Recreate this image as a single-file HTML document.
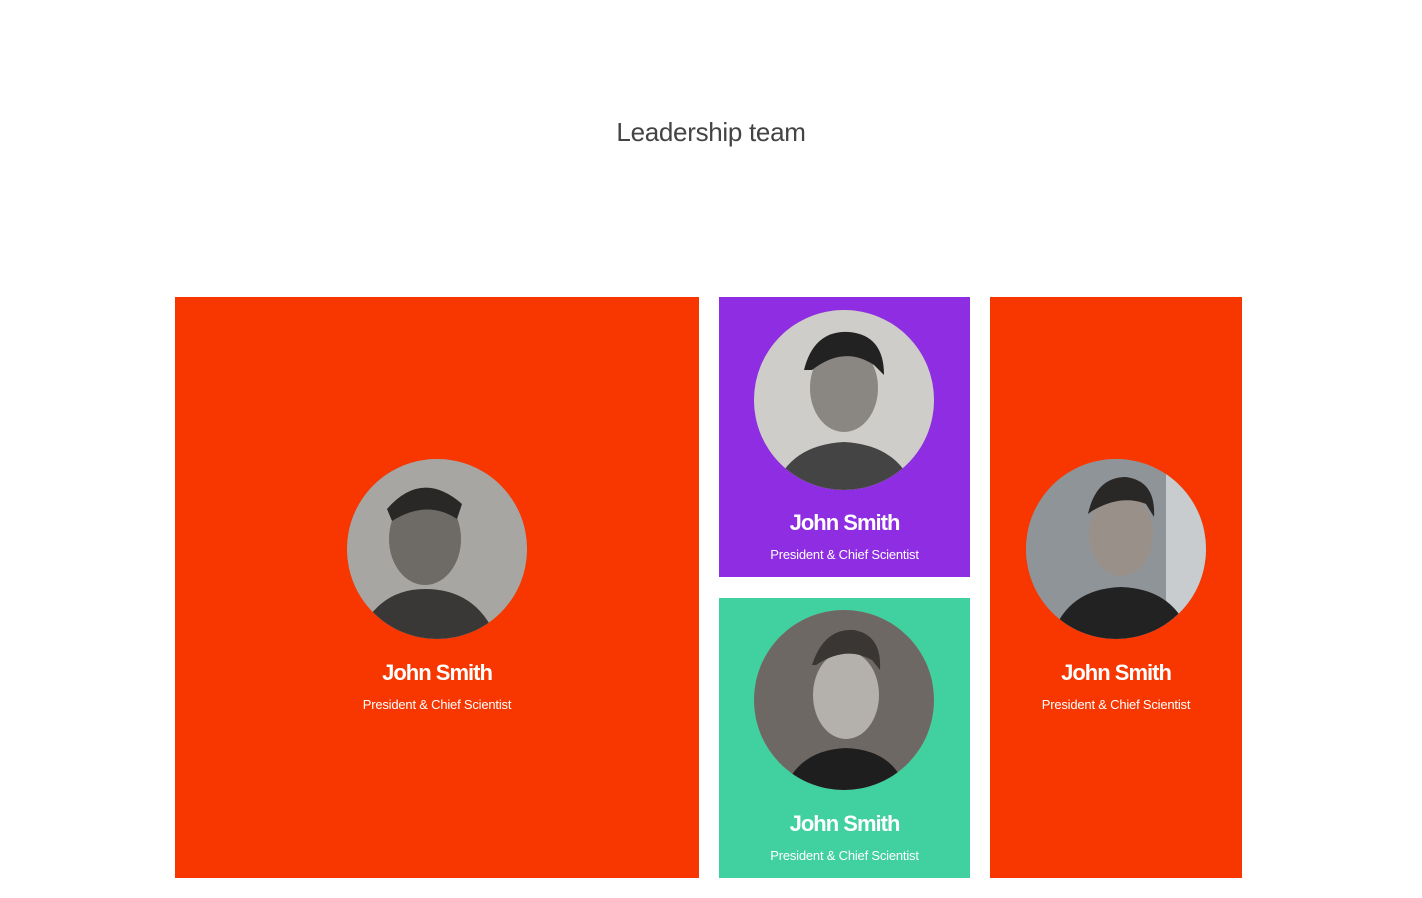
<!DOCTYPE html>
<html><head><meta charset="utf-8"><style>
*{margin:0;padding:0;box-sizing:border-box}
body{width:1422px;height:898px;background:#fff;font-family:"Liberation Sans",sans-serif;position:relative;overflow:hidden}
h1{position:absolute;top:117px;left:0;width:1422px;text-align:center;font-weight:normal;font-size:26px;color:#444;letter-spacing:-0.3px}
.card{position:absolute;color:#fff;text-align:center}
.av{position:absolute;width:180px;height:180px;border-radius:50%;overflow:hidden;background:#9a9a9a}
.nm{position:absolute;left:0;width:100%;font-weight:bold;font-size:22px;letter-spacing:-1px}
.rl{position:absolute;left:0;width:100%;font-size:13px;letter-spacing:-0.2px}
</style></head><body>
<h1>Leadership team</h1>

<div class="card" style="left:175px;top:297px;width:524px;height:581px;background:#f73600">
 <div class="av" style="left:172px;top:162px;background:#8a8a88">
  <svg width="180" height="180"><rect width="180" height="180" fill="#a8a6a2"/><ellipse cx="78" cy="80" rx="36" ry="46" fill="#6e6a66"/><path d="M40 50 Q75 10 115 45 L110 60 Q80 40 45 62Z" fill="#2a2826"/><path d="M10 180 Q30 130 78 130 Q130 130 150 180Z" fill="#3a3836"/></svg>
 </div>
 <div class="nm" style="top:363px">John Smith</div>
 <div class="rl" style="top:400px">President &amp; Chief Scientist</div>
</div>

<div class="card" style="left:719px;top:297px;width:251px;height:280px;background:#8e2de2">
 <div class="av" style="left:35px;top:13px">
  <svg width="180" height="180"><rect width="180" height="180" fill="#cfcdc9"/><ellipse cx="90" cy="78" rx="34" ry="44" fill="#8a8682"/><path d="M50 60 Q60 20 95 22 Q130 25 130 65 L120 55 Q90 35 58 60Z" fill="#222"/><path d="M20 180 Q35 135 90 132 Q145 135 160 180Z" fill="#444"/></svg>
 </div>
 <div class="nm" style="top:213px">John Smith</div>
 <div class="rl" style="top:250px">President &amp; Chief Scientist</div>
</div>

<div class="card" style="left:719px;top:598px;width:251px;height:280px;background:#41d09f">
 <div class="av" style="left:35px;top:12px">
  <svg width="180" height="180"><rect width="180" height="180" fill="#6e6864"/><ellipse cx="92" cy="85" rx="33" ry="44" fill="#b4b0ac"/><path d="M58 55 Q70 18 100 20 Q128 25 126 60 L118 50 Q92 35 62 55Z" fill="#3a3634"/><path d="M30 180 Q45 140 92 138 Q140 140 152 180Z" fill="#1e1e1e"/></svg>
 </div>
 <div class="nm" style="top:213px">John Smith</div>
 <div class="rl" style="top:250px">President &amp; Chief Scientist</div>
</div>

<div class="card" style="left:990px;top:297px;width:252px;height:581px;background:#f73600">
 <div class="av" style="left:36px;top:162px">
  <svg width="180" height="180"><rect width="180" height="180" fill="#8f9498"/><rect x="140" width="40" height="180" fill="#c8ccce"/><ellipse cx="95" cy="75" rx="32" ry="42" fill="#9a908a"/><path d="M62 55 Q70 18 100 18 Q130 22 128 58 L120 45 Q95 35 66 52Z" fill="#2a2826"/><path d="M25 180 Q40 130 95 128 Q150 130 165 180Z" fill="#222"/></svg>
 </div>
 <div class="nm" style="top:363px">John Smith</div>
 <div class="rl" style="top:400px">President &amp; Chief Scientist</div>
</div>
</body></html>
